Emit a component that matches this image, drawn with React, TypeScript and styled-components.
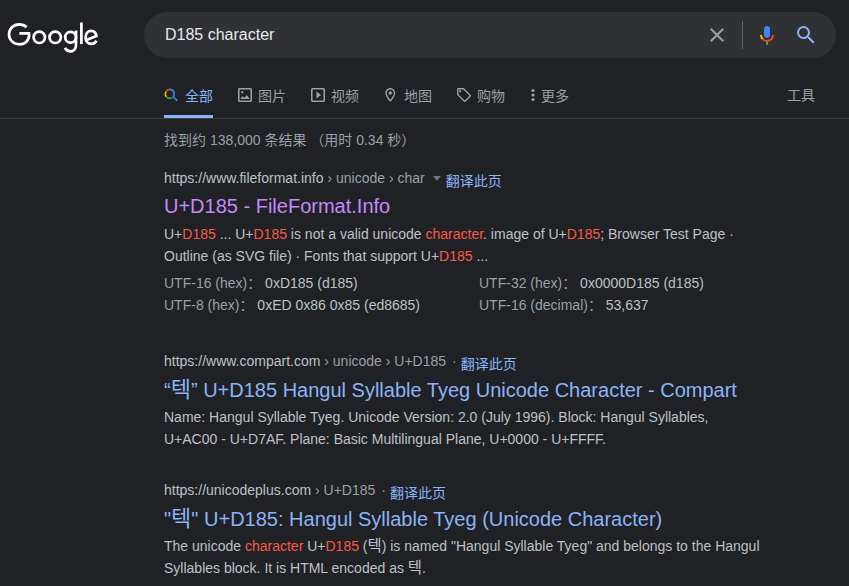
import React from "react"
import styled, { createGlobalStyle } from "styled-components"

const GlobalStyle = createGlobalStyle`
  html, body {
    margin: 0;
    height: 586px;
    overflow: hidden;
    background: #202124;
  }
  body {
    font-family: "Liberation Sans", "Noto Sans CJK SC", Arial, sans-serif;
    font-size: 14px;
    color: #bdc1c6;
  }
`

const Logo = () => (
  <svg width="92" height="32" viewBox="0 0 92 32" fill="none" stroke="#fff" strokeWidth="2.7">
    <path d="M19.6 6.2a10.3 10.3 0 0 0-7.2-2.9C6.6 3.3 2 7.8 2 13.3s4.6 10 10.4 10c5.9 0 9.7-3.9 9.7-9.3 0-.7-.1-1.2-.2-1.7H12.4" />
    <circle cx="32.3" cy="16.3" r="5.7" />
    <circle cx="48.2" cy="16.3" r="5.7" />
    <circle cx="63.6" cy="16.3" r="5.4" />
    <path d="M69 9.5v14.3c0 4.5-2.6 6.6-5.7 6.6-2.6 0-4.5-1.7-5.2-3.6" />
    <path d="M74.4 1.5v21.6" />
    <path d="M89.5 19.7c-1.1 1.8-2.9 3.2-5.2 3.2-3.3 0-5.7-2.8-5.7-6.5 0-3.9 2.4-6.6 5.5-6.6 3.2 0 4.9 2.7 5.4 5.2l-10 4.1" />
  </svg>
)

const ClearIcon = () => (
  <svg width="24" height="24" viewBox="0 0 24 24" fill="#9aa0a6">
    <path d="M19 6.41 17.59 5 12 10.59 6.41 5 5 6.41 10.59 12 5 17.59 6.41 19 12 13.41 17.59 19 19 17.59 13.41 12z" />
  </svg>
)

const MicIcon = () => (
  <svg width="24" height="24" viewBox="0 0 24 24">
    <path fill="#4285f4" d="M12 15c1.66 0 3-1.31 3-2.97V6c0-1.66-1.34-3-3-3S9 4.34 9 6v6.03C9 13.69 10.34 15 12 15z" />
    <path fill="#34a853" d="M11 18.08h2V22h-2z" />
    <path fill="#fbbc04" d="M7.05 16.87a6.9 6.9 0 0 1-2.05-4.87h2c0 1.35.56 2.55 1.46 3.42z" />
    <path fill="#ea4335" d="M12 17c-1.4 0-2.65-.6-3.54-1.58l-1.41 1.45A7 7 0 0 0 12 19c3.87 0 7-3.13 7-7h-2c0 2.76-2.24 5-5 5z" />
  </svg>
)

const SearchIcon = () => (
  <svg width="24" height="24" viewBox="0 0 24 24" fill="#8ab4f8">
    <path d="M15.5 14h-.79l-.28-.27A6.47 6.47 0 0 0 16 9.5 6.5 6.5 0 1 0 9.5 16c1.61 0 3.09-.59 4.23-1.57l.27.28v.79l5 4.99L20.49 19l-4.99-5zm-6 0C7.01 14 5 11.99 5 9.5S7.01 5 9.5 5 14 7.01 14 9.5 11.99 14 9.5 14z" />
  </svg>
)

const AllIcon = () => (
  <svg width="14" height="14" viewBox="0 0 16 16" fill="none" strokeWidth="1.9">
    <path stroke="#ea4335" d="M2.2 4.4A5.3 5.3 0 0 1 6.6 1.5" />
    <path stroke="#fbbc04" d="M2.2 4.4A5.3 5.3 0 0 0 2.7 10" />
    <path stroke="#34a853" d="M2.7 10a5.3 5.3 0 0 0 6.6 1" />
    <path stroke="#4285f4" d="M6.6 1.5a5.3 5.3 0 0 1 4 8.5l4.600 4.700" />
  </svg>
)

const ImageIcon = () => (
  <svg width="14" height="14" viewBox="3 3 18 18" fill="#9aa0a6">
    <path d="M19 5v14H5V5h14m0-2H5c-1.1 0-2 .9-2 2v14c0 1.1.9 2 2 2h14c1.1 0 2-.9 2-2V5c0-1.1-.9-2-2-2zm-4.86 8.86-3 3.87L9 13.14 6 17h12l-3.86-5.14z" />
    <circle cx="8.5" cy="8.5" r="1.5" />
  </svg>
)

const VideoIcon = () => (
  <svg width="14" height="14" viewBox="3 3 18 18" fill="#9aa0a6">
    <path d="M10 16.5l6-4.5-6-4.5zM19 3H5c-1.1 0-2 .9-2 2v14c0 1.1.9 2 2 2h14c1.1 0 2-.9 2-2V5c0-1.1-.9-2-2-2zm0 16H5V5h14v14z" />
  </svg>
)

const MapIcon = () => (
  <svg width="14" height="14" viewBox="3 2 20 20" fill="#9aa0a6">
    <path d="M12 2C8.13 2 5 5.13 5 9c0 5.25 7 13 7 13s7-7.75 7-13c0-3.87-3.13-7-7-7zM7 9c0-2.76 2.24-5 5-5s5 2.24 5 5c0 2.88-2.88 7.19-5 9.88C9.92 16.21 7 11.85 7 9z" />
    <circle cx="12" cy="9" r="2.5" />
  </svg>
)

const TagIcon = () => (
  <svg width="14" height="14" viewBox="2 2 20 20" fill="#9aa0a6">
    <path d="M21.41 11.58l-9-9C12.05 2.22 11.55 2 11 2H4c-1.1 0-2 .9-2 2v7c0 .55.22 1.05.59 1.42l9 9c.36.36.86.58 1.41.58s1.05-.22 1.41-.59l7-7c.37-.36.59-.86.59-1.41s-.23-1.06-.59-1.42zM13 20.01L4 11V4h7v-.01l9 9-7 7.02z" />
    <circle cx="6.5" cy="6.5" r="1.5" />
  </svg>
)

const MoreIcon = () => (
  <svg width="4" height="14" viewBox="0 0 4 14" fill="#9aa0a6">
    <circle cx="2" cy="2.5" r="1.6" />
    <circle cx="2" cy="7" r="1.6" />
    <circle cx="2" cy="11.5" r="1.6" />
  </svg>
)

interface Tab {
  label: string
  icon: React.ReactNode
  width: number
  inset?: number
  gap?: number
  active?: boolean
}

const tabs: Tab[] = [
  { label: "全部", icon: <AllIcon />, width: 73, gap: 7, active: true },
  { label: "图片", icon: <ImageIcon />, width: 73, inset: 1 },
  { label: "视频", icon: <VideoIcon />, width: 73, inset: 1 },
  { label: "地图", icon: <MapIcon />, width: 73, inset: 1 },
  { label: "购物", icon: <TagIcon />, width: 75, inset: 1 },
  { label: "更多", icon: <MoreIcon />, width: 48 },
]

const Translate = () => <S.Translate>翻译此页</S.Translate>

export default function App() {
  return (
    <S.Page>
      <GlobalStyle />
      <S.Header>
        <S.LogoBox>
          <Logo />
        </S.LogoBox>
        <S.SearchBar>
          <S.Query>D185 character</S.Query>
          <S.SearchActions>
            <ClearIcon />
            <S.Divider />
            <MicIcon />
            <SearchIcon />
          </S.SearchActions>
        </S.SearchBar>
      </S.Header>
      <S.Nav>
        {tabs.map((t) => (
          <S.Tab key={t.label} $active={t.active} $width={t.width} $gap={t.gap ?? 6} $inset={t.inset ?? 0}>
            {t.icon}
            <span>{t.label}</span>
          </S.Tab>
        ))}
        <S.Tools>工具</S.Tools>
      </S.Nav>
      <S.Main>
        <S.Stats>找到约 138,000 条结果 （用时 0.34 秒）</S.Stats>

        <S.Result $height={183}>
          <S.UrlRow>
            https://www.fileformat.info
            <S.Crumb> › unicode › char</S.Crumb>
            <S.Caret />
            <Translate />
          </S.UrlRow>
          <S.Title $visited>U+D185 - FileFormat.Info</S.Title>
          <S.Snippet>
            U+<em>D185</em> ... U+<em>D185</em> is not a valid unicode <em>character</em>. image of U+<em>D185</em>; Browser Test Page ·
            <br />
            Outline (as SVG file) · Fonts that support U+<em>D185</em> ...
          </S.Snippet>
          <S.Attributes>
            <div><S.AttrName>UTF-16 (hex)：</S.AttrName> 0xD185 (d185)</div>
            <div><S.AttrName>UTF-32 (hex)：</S.AttrName> 0x0000D185 (d185)</div>
            <div><S.AttrName>UTF-8 (hex)：</S.AttrName> 0xED 0x86 0x85 (ed8685)</div>
            <div><S.AttrName>UTF-16 (decimal)：</S.AttrName> 53,637</div>
          </S.Attributes>
        </S.Result>

        <S.Result $height={129}>
          <S.UrlRow>
            https://www.compart.com
            <S.Crumb> › unicode › U+D185</S.Crumb>
            <S.Dot>·</S.Dot>
            <Translate />
          </S.UrlRow>
          <S.Title>“<S.Hangul>텍</S.Hangul>” U+D185 Hangul Syllable Tyeg Unicode Character - Compart</S.Title>
          <S.Snippet>
            Name: Hangul Syllable Tyeg. Unicode Version: 2.0 (July 1996). Block: Hangul Syllables,
            <br />
            U+AC00 - U+D7AF. Plane: Basic Multilingual Plane, U+0000 - U+FFFF.
          </S.Snippet>
        </S.Result>

        <S.Result $height={110}>
          <S.UrlRow>
            https://unicodeplus.com
            <S.Crumb> › U+D185</S.Crumb>
            <S.Dot>·</S.Dot>
            <Translate />
          </S.UrlRow>
          <S.Title>"<S.Hangul>텍</S.Hangul>" U+D185: Hangul Syllable Tyeg (Unicode Character)</S.Title>
          <S.Snippet>
            The unicode <em>character</em> U+<em>D185</em> (<S.Hangul>텍</S.Hangul>) is named "Hangul Syllable Tyeg" and belongs to the Hangul
            <br />
            Syllables block. It is HTML encoded as <S.Hangul>텍</S.Hangul>.
          </S.Snippet>
        </S.Result>
      </S.Main>
    </S.Page>
  )
}

const S = {
  Page: styled.div`
    width: 849px;
    height: 586px;
    overflow: hidden;
    background: #202124;
  `,
  Header: styled.header`
    display: flex;
    height: 46px;
    padding: 12px 13px 0 7px;
  `,
  LogoBox: styled.div`
    width: 137px;
    padding-top: 9px;
  `,
  SearchBar: styled.div`
    flex: 1;
    display: flex;
    align-items: center;
    justify-content: space-between;
    height: 46px;
    padding: 0 18px 0 21px;
    border-radius: 23px;
    background: #303134;
  `,
  Query: styled.div`
    font-size: 16px;
    color: #e8eaed;
  `,
  SearchActions: styled.div`
    display: flex;
    align-items: center;
    gap: 15px;
  `,
  Divider: styled.div`
    width: 1px;
    height: 28px;
    margin: 0 -3px 0 -2px;
    background: #5f6368;
  `,
  Nav: styled.nav`
    display: flex;
    align-items: stretch;
    height: 61px;
    padding: 0 34px 0 164px;
    box-sizing: border-box;
    border-bottom: 1px solid #3c4043;
  `,
  Tab: styled.div<{ $active?: boolean; $width: number; $gap: number; $inset: number }>`
    display: flex;
    align-items: center;
    gap: ${(p) => p.$gap}px;
    box-sizing: border-box;
    width: ${(p) => p.$width}px;
    height: 60px;
    padding: 13px 0 0 ${(p) => p.$inset}px;
    font-size: 14px;
    color: ${(p) => (p.$active ? "#8ab4f8" : "#9aa0a6")};
    background: ${(p) => (p.$active ? "linear-gradient(#8ab4f8, #8ab4f8) left bottom / 49px 3px no-repeat" : "none")};
  `,
  Tools: styled.div`
    margin-left: auto;
    padding-top: 26px;
    font-size: 14px;
    color: #9aa0a6;
  `,
  Main: styled.main`
    padding-left: 164px;
  `,
  Stats: styled.div`
    height: 49px;
    padding-top: 11px;
    box-sizing: border-box;
    line-height: 20px;
    color: #9aa0a6;
  `,
  Result: styled.section<{ $height: number }>`
    height: ${(p) => p.$height}px;
    em {
      font-style: normal;
      color: #f75a4a;
    }
  `,
  UrlRow: styled.div`
    display: flex;
    align-items: baseline;
    height: 20px;
    line-height: 20px;
    color: #bdc1c6;
    white-space: pre;
  `,
  Crumb: styled.span`
    color: #9aa0a6;
  `,
  Caret: styled.span`
    width: 0;
    height: 0;
    margin: 0 5px 0 8px;
    border-left: 4.5px solid transparent;
    border-right: 4.5px solid transparent;
    border-top: 5px solid #70757a;
    align-self: center;
  `,
  Dot: styled.span`
    margin-left: 6px;
    margin-right: 4px;
    color: #9aa0a6;
  `,
  Translate: styled.span`
    position: relative;
    top: 3px;
    font-size: 14px;
    color: #8ab4f8;
  `,
  Title: styled.h3<{ $visited?: boolean }>`
    margin: 5px 0 0;
    height: 26px;
    font-size: 20px;
    font-weight: 400;
    line-height: 26px;
    color: ${(p) => (p.$visited ? "#c58af9" : "#8ab4f8")};
    white-space: nowrap;
  `,
  Hangul: styled.span`
    font-family: "Noto Sans CJK KR", sans-serif;
    font-size: 1.1em;
    line-height: 1;
  `,
  Snippet: styled.div`
    margin-top: 4px;
    line-height: 22px;
    white-space: nowrap;
  `,
  Attributes: styled.div`
    display: grid;
    grid-template-columns: 315px 1fr;
    margin-top: 5px;
    line-height: 22px;
  `,
  AttrName: styled.span`
    color: #9aa0a6;
  `,
}
